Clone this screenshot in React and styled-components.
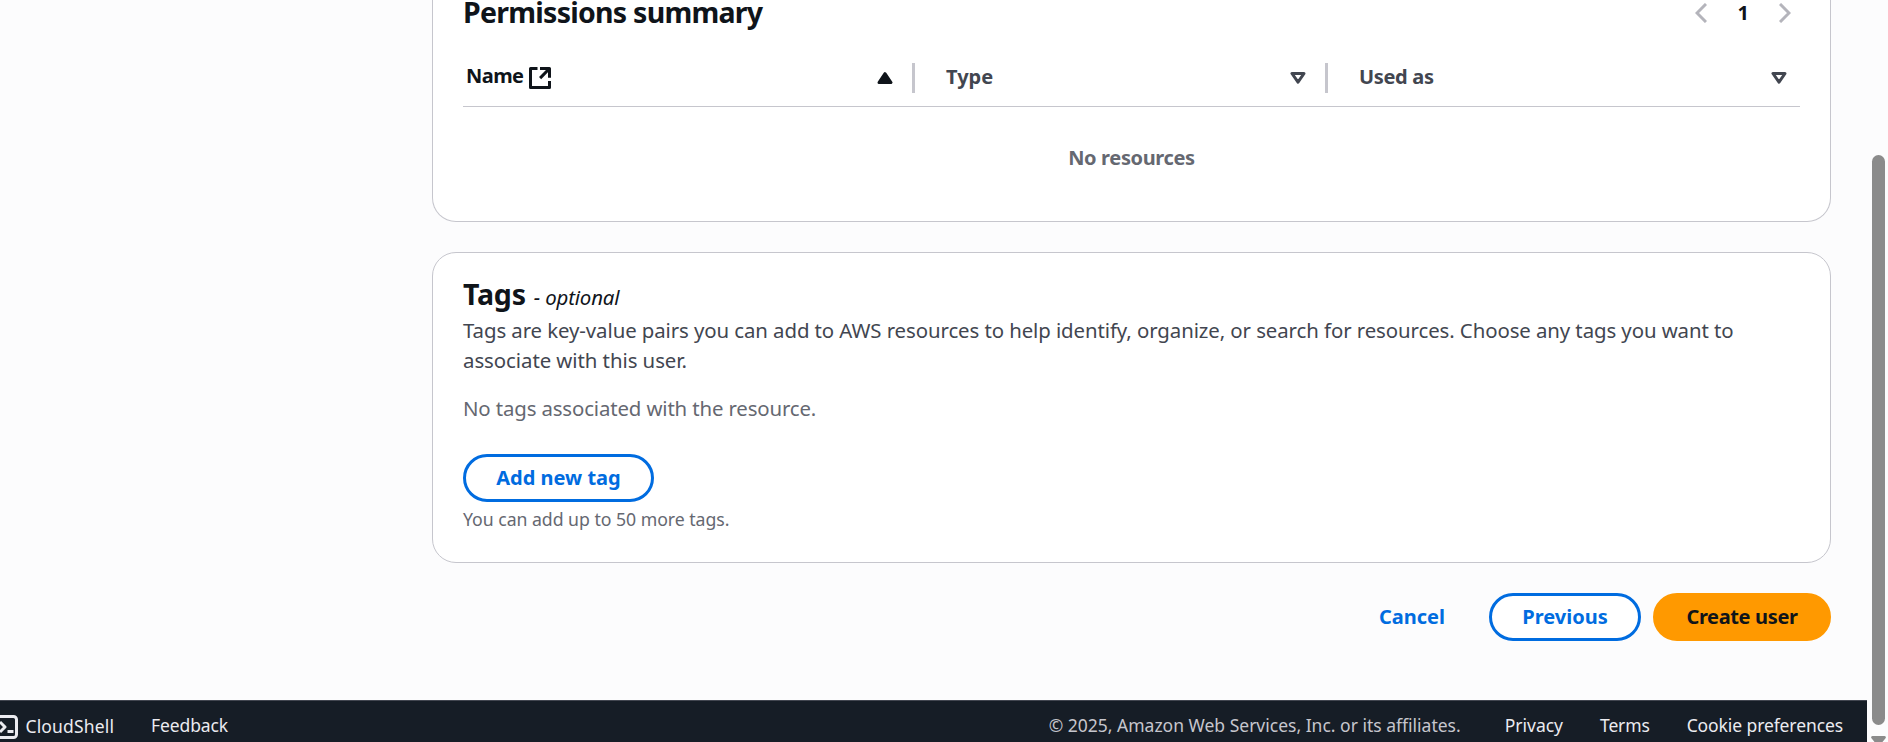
import React from 'react';
import styled, { createGlobalStyle } from 'styled-components';

const GlobalStyle = createGlobalStyle`
  * { box-sizing: border-box; }
  body { margin: 0; background: #fcfcfd; }
  button { font-family: inherit; }
`;

const Shell = styled.div`
  display: flex;
  width: 1888px;
  height: 742px;
  overflow: hidden;
  background: #fcfcfd;
  color: #0f141a;
  font: 400 20.4px/30px "Noto Sans", "Open Sans", sans-serif;
  white-space: nowrap;
`;

const Page = styled.div`
  display: flex;
  flex-direction: column;
  width: 1867px;
`;

const Main = styled.main`
  display: flex;
  flex-direction: column;
  gap: 30px;
  height: 700px;
  padding: 0 36px 0 432px;
`;

const Label = styled.span`
  letter-spacing: ${(p) => p.$spacing || 0}px;
`;

const Card = styled.section`
  display: flex;
  flex-direction: column;
  height: ${(p) => p.$height}px;
  padding: 22px 30px 31px;
  background: #fff;
  border: 1px solid #c6c6cd;
  border-radius: 24px;
  ${(p) => p.$scrolled && `
    padding-top: 0;
    border-top: 0;
    border-radius: 0 0 24px 24px;
  `}
`;

const CardHeader = styled.header`
  display: flex;
  justify-content: space-between;
  height: 49px;
`;

const Title = styled.h2`
  margin: 0;
  font-size: 28.5px;
  font-weight: 700;
  line-height: ${(p) => p.$line}px;
  letter-spacing: ${(p) => p.$spacing}px;
`;

const Optional = styled.i`
  margin-left: 8px;
  font-size: 20.4px;
  font-weight: 400;
  line-height: 1;
  letter-spacing: -0.15px;
`;

const Pagination = styled.nav`
  display: flex;
  align-items: flex-start;
  gap: 30px;
  padding: 3px 9px 0 0;
  font-size: 20px;
  font-weight: 700;
  line-height: 19px;
`;

const PageNumber = styled.span`
  margin-left: 1px;
`;

const HeaderRow = styled.div`
  display: grid;
  grid-template-columns: 452px 413px 472px;
  height: 58px;
  border-bottom: 1px solid #c6c6cd;
  color: #424650;
  font-size: 20px;
  font-weight: 700;
`;

const HeaderCell = styled.div`
  display: flex;
  align-items: center;
  justify-content: space-between;
  height: 30px;
  margin-top: 14px;
  padding: 0 ${(p) => p.$right}px 0 ${(p) => p.$left}px;
  border-right: ${(p) => (p.$last ? 0 : 3)}px solid #c6c6cd;
  color: ${(p) => (p.$active ? '#0f141a' : 'inherit')};
`;

const HeaderText = styled.span`
  display: flex;
  align-items: center;
  gap: 6px;
  padding-bottom: ${(p) => p.$lift || 2}px;
`;

const ExternalSvg = styled.svg`
  margin-top: 4px;
`;

const Empty = styled.div`
  margin-top: 36px;
  text-align: center;
  color: #656871;
  font-size: 20px;
  font-weight: 700;
`;

const Description = styled.p`
  display: flex;
  flex-direction: column;
  margin: 2px 0 0;
  color: #424650;
`;

const Muted = styled.p`
  margin: 18px 0 31px;
  color: #656871;
`;

const Hint = styled.p`
  margin: 5px 0 0;
  color: #656871;
  font-size: 17.7px;
  line-height: 24px;
`;

const Button = styled.button`
  flex-shrink: 0;
  width: ${(p) => p.$width}px;
  height: 48px;
  padding: 0;
  border: 3px solid ${(p) => (p.$primary ? '#ff9900' : '#006ce0')};
  border-radius: 30px;
  background: ${(p) => (p.$primary ? '#ff9900' : '#fff')};
  color: ${(p) => (p.$primary ? '#0f141a' : '#006ce0')};
  font-size: 20px;
  font-weight: 700;
  line-height: 30px;
`;

const LinkButton = styled(Button)`
  width: auto;
  margin-right: 29px;
  border-color: transparent;
  background: transparent;
`;

const Actions = styled.div`
  display: flex;
  justify-content: flex-end;
  gap: 12px;
`;

const Footer = styled.footer`
  display: flex;
  align-items: center;
  justify-content: space-between;
  height: 42px;
  padding: 7px 24px 0 0;
  border-top: 1px solid #424650;
  background: #161d26;
  color: #ebebf0;
  font-size: 17.5px;
  line-height: 24px;
`;

const FooterGroup = styled.div`
  display: flex;
  align-items: center;
  gap: 37px;
`;

const CloudShell = styled.div`
  display: flex;
  align-items: center;
  gap: 7.5px;
  margin-left: -6px;
  padding-top: 2px;
`;

const TerminalSvg = styled.svg`
  margin: 1px 0 -1px;
`;

const Copyright = styled.span`
  margin-right: 7px;
  color: #c6c6cd;
`;

const ScrollTrack = styled.aside`
  display: flex;
  flex-direction: column;
  gap: 11px;
  width: 21px;
  padding: 155px 2px 0 4px;
`;

const ScrollThumb = styled.div`
  flex-shrink: 0;
  width: 13px;
  height: 570px;
  margin-left: 1px;
  border-radius: 7px;
  background: #8b8b8b;
`;

const ScrollArrow = styled.svg`
  flex-shrink: 0;
`;

const Chevron = ({ flip }) => (
  <svg width="12" height="20" viewBox="0 0 12 20" fill="none" stroke="#b4b4bb" strokeWidth="3">
    <path d={flip ? 'M1 1l9 9-9 9' : 'M11 1l-9 9 9 9'} />
  </svg>
);

const SortIcon = ({ active }) => (
  <svg width="16" height="12" viewBox="0 0 16 12" fill={active ? 'currentColor' : 'none'} stroke="currentColor" strokeWidth="3" strokeLinejoin="round">
    <path d={active ? 'M8 1.7L14 10.5H2z' : 'M2 1.5h12L8 10.2z'} />
  </svg>
);

const ExternalIcon = () => (
  <ExternalSvg width="22" height="22" viewBox="0 0 22 22" fill="none" stroke="currentColor" strokeWidth="3" strokeLinejoin="round">
    <path d="M8.5 1.5h-7v19h19V14" />
    <path d="M11 1.5h9.5v9.2M20.5 1.5l-9.4 9.6" />
  </ExternalSvg>
);

const TerminalIcon = () => (
  <TerminalSvg width="24" height="24" viewBox="0 0 24 24" fill="none" stroke="currentColor" strokeWidth="3">
    <rect x="1.5" y="1.5" width="21" height="21" rx="3" />
    <path d="M6 7l5 5-5 5M13.5 16.5h6" strokeLinejoin="round" />
  </TerminalSvg>
);

export default function App() {
  return (
    <Shell>
      <GlobalStyle />
      <Page>
        <Main>
          <Card $height={222} $scrolled>
            <CardHeader>
              <Title $line={25} $spacing={-0.74}>Permissions summary</Title>
              <Pagination>
                <Chevron />
                <PageNumber>1</PageNumber>
                <Chevron flip />
              </Pagination>
            </CardHeader>
            <HeaderRow>
              <HeaderCell $left={3} $right={19} $active>
                <HeaderText $lift={4}><Label $spacing={-0.55}>Name</Label><ExternalIcon /></HeaderText>
                <SortIcon active />
              </HeaderCell>
              <HeaderCell $left={31} $right={19}>
                <HeaderText><Label>Type</Label></HeaderText>
                <SortIcon />
              </HeaderCell>
              <HeaderCell $left={31} $right={13} $last>
                <HeaderText><Label $spacing={-0.33}>Used as</Label></HeaderText>
                <SortIcon />
              </HeaderCell>
            </HeaderRow>
            <Empty><Label $spacing={-0.35}>No resources</Label></Empty>
          </Card>

          <Card $height={311}>
            <Title $line={38} $spacing={-0.2}>Tags<Optional>- optional</Optional></Title>
            <Description>
              <Label $spacing={-0.085}>Tags are key-value pairs you can add to AWS resources to help identify, organize, or search for resources. Choose any tags you want to</Label>
              <Label $spacing={-0.06}>associate with this user.</Label>
            </Description>
            <Muted><Label $spacing={-0.14}>No tags associated with the resource.</Label></Muted>
            <Button $width={191}><Label>Add new tag</Label></Button>
            <Hint><Label $spacing={-0.04}>You can add up to 50 more tags.</Label></Hint>
          </Card>

          <Actions>
            <LinkButton><Label>Cancel</Label></LinkButton>
            <Button $width={152}><Label>Previous</Label></Button>
            <Button $width={178} $primary><Label $spacing={-0.35}>Create user</Label></Button>
          </Actions>
        </Main>

        <Footer>
          <FooterGroup>
            <CloudShell><TerminalIcon /><Label $spacing={0.15}>CloudShell</Label></CloudShell>
            <Label $spacing={-0.12}>Feedback</Label>
          </FooterGroup>
          <FooterGroup>
            <Copyright>© 2025, Amazon Web Services, Inc. or its affiliates.</Copyright>
            <Label>Privacy</Label>
            <Label $spacing={-0.15}>Terms</Label>
            <Label $spacing={-0.1}>Cookie preferences</Label>
          </FooterGroup>
        </Footer>
      </Page>
      <ScrollTrack>
        <ScrollThumb />
        <ScrollArrow width="15" height="10" viewBox="0 0 15 10" fill="#8b8b8b"><path d="M1.5 0h12a1.4 1.4 0 0 1 1 2.3L9 9H6L.5 2.3A1.4 1.4 0 0 1 1.5 0z" /></ScrollArrow>
      </ScrollTrack>
    </Shell>
  );
}
